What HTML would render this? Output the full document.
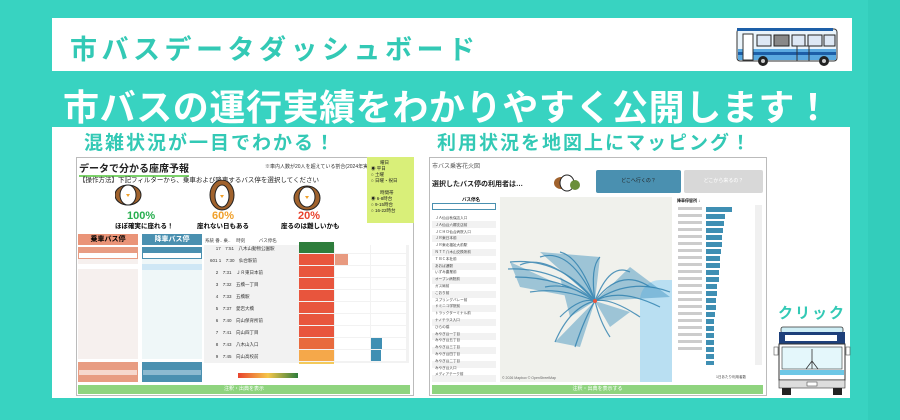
<!DOCTYPE html>
<html><head><meta charset="utf-8"><style>
*{margin:0;padding:0;box-sizing:border-box}
body{width:900px;height:420px;background:#38d3c1;position:relative;overflow:hidden;font-family:"Liberation Sans","Noto Sans CJK JP",sans-serif}
.a{position:absolute}
.t{white-space:nowrap}
</style></head><body>
<div class="a" style="left:868px;top:0;width:32px;height:420px;background:#33cdbb"></div>
<div class="a" style="left:52px;top:18px;width:800px;height:53px;background:#fff"></div>
<div class="a t" style="left:70px;top:28px;font-size:27px;font-weight:bold;color:#33c9b5;letter-spacing:4.5px">市バスデータダッシュボード</div>
<!-- bus top -->
<svg class="a" style="left:733px;top:27px" width="108" height="42" viewBox="0 0 108 42">
<rect x="4" y="2" width="100" height="32" rx="3" fill="#eaf4fb" stroke="#333" stroke-width="1"/>
<rect x="4" y="1" width="96" height="3" fill="#1d5fa8"/>
<rect x="5" y="22" width="98" height="11" fill="#5aa9e0"/>
<rect x="5" y="25" width="98" height="3" fill="#1d5fa8"/>
<rect x="10" y="7" width="10" height="26" fill="#fff" stroke="#333"/>
<rect x="24" y="8" width="14" height="11" fill="#dde8f5" stroke="#222"/><rect x="41" y="8" width="15" height="11" fill="#888" stroke="#222"/><rect x="59" y="8" width="13" height="11" fill="#dde8f5" stroke="#222"/><rect x="75" y="8" width="14" height="11" fill="#dde8f5" stroke="#222"/><rect x="91" y="8" width="11" height="11" fill="#dde8f5" stroke="#222"/>
<rect x="64" y="19" width="12" height="15" fill="none" stroke="#333"/>
<circle cx="30" cy="34" r="5" fill="#222"/><circle cx="30" cy="34" r="2" fill="#ccc"/>
<circle cx="91" cy="34" r="5" fill="#222"/><circle cx="91" cy="34" r="2" fill="#ccc"/>
</svg>
<div class="a t" style="left:63px;top:79px;font-size:36px;font-weight:bold;color:#fff;letter-spacing:0.6px">市バスの運行実績をわかりやすく公開します！</div>
<div class="a" style="left:52px;top:127px;width:798px;height:271px;background:#fff"></div>
<div class="a t" style="left:84px;top:128px;font-size:19px;font-weight:bold;color:#33c9b5;letter-spacing:2px">混雑状況が一目でわかる！</div>
<div class="a t" style="left:437px;top:128px;font-size:19px;font-weight:bold;color:#33c9b5;letter-spacing:2px">利用状況を地図上にマッピング！</div>

<!-- left panel -->
<div class="a" style="left:76px;top:157px;width:338px;height:239px;background:#fff;border:1px solid #bbb"></div>
<div class="a t" style="left:79px;top:160px;font-size:10px;font-weight:bold;color:#222;border-bottom:2px solid #7cd36a">データで分かる座席予報</div>
<div class="a t" style="left:265px;top:163px;font-size:5px;color:#333">※車内人数が20人を超えている割合(2024年実績)</div>
<div class="a t" style="left:79px;top:174px;font-size:6.5px;color:#222">【操作方法】下記フィルターから、乗車および降車するバス停を選択してください</div>
<div class="a" style="left:367px;top:157px;width:47px;height:66px;background:#d9ef79"></div>
<div class="a" style="left:371px;top:160px;font-size:4.5px;line-height:6px;color:#222">　　曜日<br>◉ 平日<br>○ 土曜<br>○ 日曜・祝日<br><br>　　時間帯<br>◉ 6-8時台<br>○ 9-15時台<br>○ 16-22時台</div>
<svg class="a" style="left:115px;top:180px" width="250" height="32">
<g fill="#a0622d" stroke="#222"><ellipse cx="13" cy="15" rx="13" ry="10"/><ellipse cx="107" cy="15" rx="12" ry="15"/><ellipse cx="192" cy="18" rx="13" ry="12"/></g>
<g fill="#fff" stroke="#222"><ellipse cx="13" cy="15" rx="8" ry="10"/><ellipse cx="107" cy="16" rx="7" ry="11"/><ellipse cx="192" cy="17" rx="8" ry="10"/></g>
<g fill="#f0a02a"><path d="M11 14 L15 14 L13 17Z"/><path d="M105 15 L109 15 L107 18Z"/><path d="M190 16 L194 16 L192 19Z"/></g>
</svg>
<div class="a t" style="left:127px;top:210px;font-size:11px;font-weight:bold;color:#27ae4f">100%</div>
<div class="a t" style="left:115px;top:220px;font-size:6.5px;font-weight:bold">ほぼ確実に座れる！</div>
<div class="a t" style="left:212px;top:210px;font-size:11px;font-weight:bold;color:#f0a02a">60%</div>
<div class="a t" style="left:197px;top:220px;font-size:6.5px;font-weight:bold">座れない日もある</div>
<div class="a t" style="left:298px;top:210px;font-size:11px;font-weight:bold;color:#e8432e">20%</div>
<div class="a t" style="left:281px;top:220px;font-size:6.5px;font-weight:bold">座るのは難しいかも</div>
<div class="a t" style="left:78px;top:234px;width:60px;height:11px;background:#ea9478;font-size:7px;font-weight:bold;text-align:center;line-height:11px">乗車バス停</div>
<div class="a t" style="left:142px;top:234px;width:60px;height:11px;background:#4a90b0;font-size:7px;font-weight:bold;text-align:center;line-height:11px;color:#fff">降車バス停</div>
<div class="a" style="left:78px;top:247px;width:60px;height:112px;background:#f6f0ee"></div>
<div class="a" style="left:78px;top:247px;width:60px;height:12px;background:#e89c82"></div>
<div class="a" style="left:79px;top:253px;width:58px;height:5px;background:#fff"></div>
<div class="a" style="left:78px;top:264px;width:60px;height:5px;background:#fff"></div>
<div class="a" style="left:142px;top:247px;width:60px;height:112px;background:#eff7f8"></div>
<div class="a" style="left:142px;top:247px;width:60px;height:12px;background:#4a90b0"></div>
<div class="a" style="left:143px;top:253px;width:58px;height:5px;background:#fff"></div>
<div class="a" style="left:142px;top:264px;width:60px;height:6px;background:#cfe7f5"></div>
<div class="a" style="left:78px;top:362px;width:60px;height:20px;background:#e89c82"></div>
<div class="a" style="left:79px;top:370px;width:58px;height:5px;background:#f6d8ce"></div>
<div class="a" style="left:142px;top:362px;width:60px;height:20px;background:#4a90b0"></div>
<div class="a" style="left:143px;top:370px;width:58px;height:5px;background:#8cbad0"></div>
<!-- table -->
<div class="a t" style="left:205px;top:238px;font-size:4.5px;color:#444">系統 番.. 乗.. 　時刻　　　バス停名</div>
<div class="a" style="left:204px;top:245px;width:205px;height:118px;background:#f2f2f2"></div>
<svg class="a" style="left:299px;top:242px" width="110" height="122">
<rect x="0" y="0" width="35" height="11" fill="#2e7d3c"/>
<g fill="#e8553d"><rect y="12" width="35" height="11"/><rect y="24" width="35" height="11"/><rect y="36" width="35" height="11"/><rect y="48" width="35" height="11"/><rect y="60" width="35" height="11"/><rect y="72" width="35" height="11"/><rect y="84" width="35" height="11"/><rect y="96" width="35" height="11" fill="#e86a3d"/></g>
<rect y="108" width="35" height="11" fill="#f5a84a"/>
<rect x="0" y="120" width="35" height="2" fill="#f3c95a"/>
<g fill="#fff"><rect x="36" y="0" width="35" height="11"/><rect x="36" y="12" width="35" height="11"/><rect x="36" y="24" width="35" height="11"/><rect x="36" y="36" width="35" height="11"/><rect x="36" y="48" width="35" height="11"/><rect x="36" y="60" width="35" height="11"/><rect x="36" y="72" width="35" height="11"/><rect x="36" y="84" width="35" height="11"/><rect x="36" y="96" width="35" height="11"/><rect x="36" y="108" width="35" height="11"/>
<rect x="72" y="0" width="35" height="11"/><rect x="72" y="12" width="35" height="11"/><rect x="72" y="24" width="35" height="11"/><rect x="72" y="36" width="35" height="11"/><rect x="72" y="48" width="35" height="11"/><rect x="72" y="60" width="35" height="11"/><rect x="72" y="72" width="35" height="11"/><rect x="72" y="84" width="35" height="11"/><rect x="72" y="96" width="35" height="11"/><rect x="72" y="108" width="35" height="11"/></g>
<rect x="36" y="12" width="13" height="11" fill="#e89a80"/>
<rect x="72" y="96" width="11" height="11" fill="#3f8fb3"/>
<rect x="72" y="108" width="10" height="11" fill="#3f8fb3"/>
</svg>
<div class="a" style="left:210px;top:243px;font-size:4.5px;line-height:12px;color:#333">　 17　7:51　八木山動物公園駅<br>601 1　7:30　仙台駅前<br>　 2　7:31　ＪＲ東日本前<br>　 3　7:32　五橋一丁目<br>　 4　7:33　五橋駅<br>　 5　7:37　愛宕大橋<br>　 6　7:40　向山保育所前<br>　 7　7:41　向山四丁目<br>　 8　7:43　八木山入口<br>　 9　7:45　向山高校前</div>
<div class="a" style="left:238px;top:373px;width:60px;height:5px;background:linear-gradient(90deg,#e8432e,#f5c64a,#2e7d3c)"></div>
<div class="a" style="left:78px;top:385px;width:332px;height:9px;background:#8fd47f;color:#fff;font-size:5px;text-align:center;line-height:9px">注釈・出典を表示</div>

<!-- right panel -->
<div class="a" style="left:429px;top:157px;width:338px;height:239px;background:#fff;border:1px solid #bbb"></div>
<div class="a t" style="left:432px;top:161px;font-size:6px;color:#555">市バス乗客花火図</div>
<div class="a t" style="left:432px;top:179px;font-size:7px;font-weight:bold;color:#222">選択したバス停の利用者は…</div>
<svg class="a" style="left:553px;top:173px" width="28" height="20"><ellipse cx="8" cy="10" rx="7" ry="6" fill="#a0622d"/><ellipse cx="14" cy="10" rx="7" ry="8" fill="#fff" stroke="#222"/><ellipse cx="22" cy="12" rx="5" ry="5" fill="#6b8f3a"/></svg>
<div class="a" style="left:596px;top:170px;width:85px;height:23px;background:#4a90b0;color:#222;font-size:5px;text-align:center;line-height:23px;border-radius:2px">どこへ行くの？</div>
<div class="a" style="left:684px;top:170px;width:79px;height:23px;background:#d8d8d8;color:#fff;font-size:5px;text-align:center;line-height:23px;border-radius:2px">どこから来るの？</div>
<div class="a t" style="left:462px;top:197px;font-size:4.5px;font-weight:bold">バス停名</div>
<div class="a" style="left:432px;top:203px;width:64px;height:7px;border:1px solid #4a90b0"></div>
<div class="a" style="left:432px;top:214px;width:64px;height:168px;background:repeating-linear-gradient(#fff 0 7px,#f2f2f2 7px 14px)"></div>
<div class="a" style="left:435px;top:215px;font-size:3.6px;line-height:6.8px;color:#444">ＪＡ仙台秋保店入口<br>ＪＡ仙台六郷支店前<br>ＪＣＨＯ仙台病院入口<br>ＪＲ東日本前<br>ＪＲ東北福祉大前駅<br>ＮＴＴ八木山交換所前<br>ＴＢＣ本社前<br>あおば通駅<br>いずみ農業前<br>オープン病院前<br>ガス局前<br>こおり前<br>スプリングバレー前<br>ドミニコ学院前<br>トラックターミナル前<br>ナノテラス入口<br>ひらの橋<br>みやぎ台一丁目<br>みやぎ台五丁目<br>みやぎ台三丁目<br>みやぎ台四丁目<br>みやぎ台二丁目<br>みやぎ台入口<br>メディアテーク前</div>
<div class="a" style="left:500px;top:197px;width:172px;height:185px;background:#f0f1ec"></div>
<div class="a" style="left:640px;top:280px;width:32px;height:102px;background:#b9dff2;border-radius:20px 0 0 0"></div>
<svg class="a" style="left:500px;top:197px" width="172" height="185">
<g fill="#3a8fbc" opacity="0.45"><path d="M95 104 L10 65 L20 90 Z"/><path d="M95 104 L40 55 L100 60 Z"/><path d="M95 104 L130 70 L170 100 Z"/><path d="M95 104 L55 145 L80 150 Z"/><path d="M95 104 L60 80 L70 120Z"/><path d="M95 104 L110 130 L130 115Z"/></g>
<g stroke="#2c7fae" stroke-width="1.2" fill="none" opacity="0.8">
<path d="M95 104 Q60 60 10 65"/><path d="M95 104 Q50 55 20 68"/><path d="M95 104 Q55 70 8 72"/><path d="M95 104 Q60 80 15 80"/><path d="M95 104 Q70 50 40 60"/><path d="M95 104 Q80 60 60 55"/><path d="M95 104 Q90 70 100 60"/><path d="M95 104 Q110 65 130 75"/><path d="M95 104 Q120 70 150 90"/><path d="M95 104 Q130 80 170 95"/><path d="M95 104 Q120 90 160 110"/><path d="M95 104 Q70 110 55 145"/><path d="M95 104 Q85 120 75 150"/><path d="M95 104 Q100 125 110 140"/><path d="M95 104 Q60 90 30 95"/><path d="M95 104 Q70 85 45 90"/><path d="M95 104 Q80 100 60 120"/><path d="M95 104 Q110 100 140 120"/>
</g>
<circle cx="95" cy="104" r="2" fill="#e8553d"/>
</svg>
<div class="a t" style="left:502px;top:376px;font-size:3.5px;color:#666">© 2026 Mapbox © OpenStreetMap</div>
<div class="a t" style="left:677px;top:198px;font-size:4px;font-weight:bold">降車停留所 ↓</div>
<svg class="a" style="left:676px;top:205px" width="90" height="160">
<g fill="#3f8fb3">
<rect x="30" y="2" width="26" height="5"/><rect x="30" y="9" width="19" height="5"/><rect x="30" y="16" width="18" height="5"/><rect x="30" y="23" width="17" height="5"/><rect x="30" y="30" width="16" height="5"/><rect x="30" y="37" width="16" height="5"/><rect x="30" y="44" width="15" height="5"/><rect x="30" y="51" width="14" height="5"/><rect x="30" y="58" width="14" height="5"/><rect x="30" y="65" width="13" height="5"/><rect x="30" y="72" width="13" height="5"/><rect x="30" y="79" width="11" height="5"/><rect x="30" y="86" width="11" height="5"/><rect x="30" y="93" width="10" height="5"/><rect x="30" y="100" width="10" height="5"/><rect x="30" y="107" width="9" height="5"/><rect x="30" y="114" width="8" height="5"/><rect x="30" y="121" width="8" height="5"/><rect x="30" y="128" width="8" height="5"/><rect x="30" y="135" width="8" height="5"/><rect x="30" y="142" width="8" height="5"/><rect x="30" y="149" width="8" height="5"/><rect x="30" y="156" width="8" height="4"/>
</g>
<g fill="#ccc"><rect x="2" y="2" width="24" height="3"/><rect x="2" y="9" width="24" height="3"/><rect x="2" y="16" width="24" height="3"/><rect x="2" y="23" width="24" height="3"/><rect x="2" y="30" width="24" height="3"/><rect x="2" y="37" width="24" height="3"/><rect x="2" y="44" width="24" height="3"/><rect x="2" y="51" width="24" height="3"/><rect x="2" y="58" width="24" height="3"/><rect x="2" y="65" width="24" height="3"/><rect x="2" y="72" width="24" height="3"/><rect x="2" y="79" width="24" height="3"/><rect x="2" y="86" width="24" height="3"/><rect x="2" y="93" width="24" height="3"/><rect x="2" y="100" width="24" height="3"/><rect x="2" y="107" width="24" height="3"/><rect x="2" y="114" width="24" height="3"/><rect x="2" y="121" width="24" height="3"/><rect x="2" y="128" width="24" height="3"/><rect x="2" y="135" width="24" height="3"/><rect x="2" y="142" width="24" height="3"/></g>
<rect x="79" y="0" width="7" height="160" fill="#f0f0f0"/>
</svg>
<div class="a t" style="left:716px;top:375px;font-size:3.5px;color:#444">1日あたり利用者数</div>
<div class="a" style="left:432px;top:385px;width:331px;height:9px;background:#8fd47f;color:#fff;font-size:5px;text-align:center;line-height:9px">注釈・出典を表示する</div>

<!-- click bus -->
<div class="a t" style="left:778px;top:302px;font-size:15px;font-weight:bold;color:#33c9b5;letter-spacing:2px">クリック</div>
<svg class="a" style="left:773px;top:325px" width="78" height="72" viewBox="0 0 78 72">
<rect x="8" y="2" width="62" height="6" rx="2" fill="#cfeef5" stroke="#333" stroke-width=".8"/>
<rect x="6" y="7" width="66" height="12" fill="#1d3f7a"/>
<rect x="12" y="10" width="52" height="6" fill="#fff"/>
<rect x="6" y="19" width="66" height="36" fill="#fff" stroke="#333"/>
<rect x="9" y="22" width="60" height="22" fill="#e4f7fb" stroke="#333" stroke-width=".6"/>
<path d="M39 24 V44 M39 36 L33 44 M39 36 L45 44" stroke="#333" stroke-width=".8" fill="none"/>
<rect x="7" y="45" width="64" height="5" fill="#6dc7e6"/>
<rect x="6" y="55" width="66" height="8" fill="#ddd" stroke="#333" stroke-width=".6"/>
<rect x="34" y="57" width="10" height="4" fill="#fff" stroke="#333" stroke-width=".5"/>
<rect x="9" y="63" width="9" height="7" fill="#222"/><rect x="60" y="63" width="9" height="7" fill="#222"/>
<rect x="1" y="22" width="4" height="8" fill="#fff" stroke="#555" stroke-width=".6"/><rect x="73" y="22" width="4" height="8" fill="#fff" stroke="#555" stroke-width=".6"/>
</svg>
</body></html>
